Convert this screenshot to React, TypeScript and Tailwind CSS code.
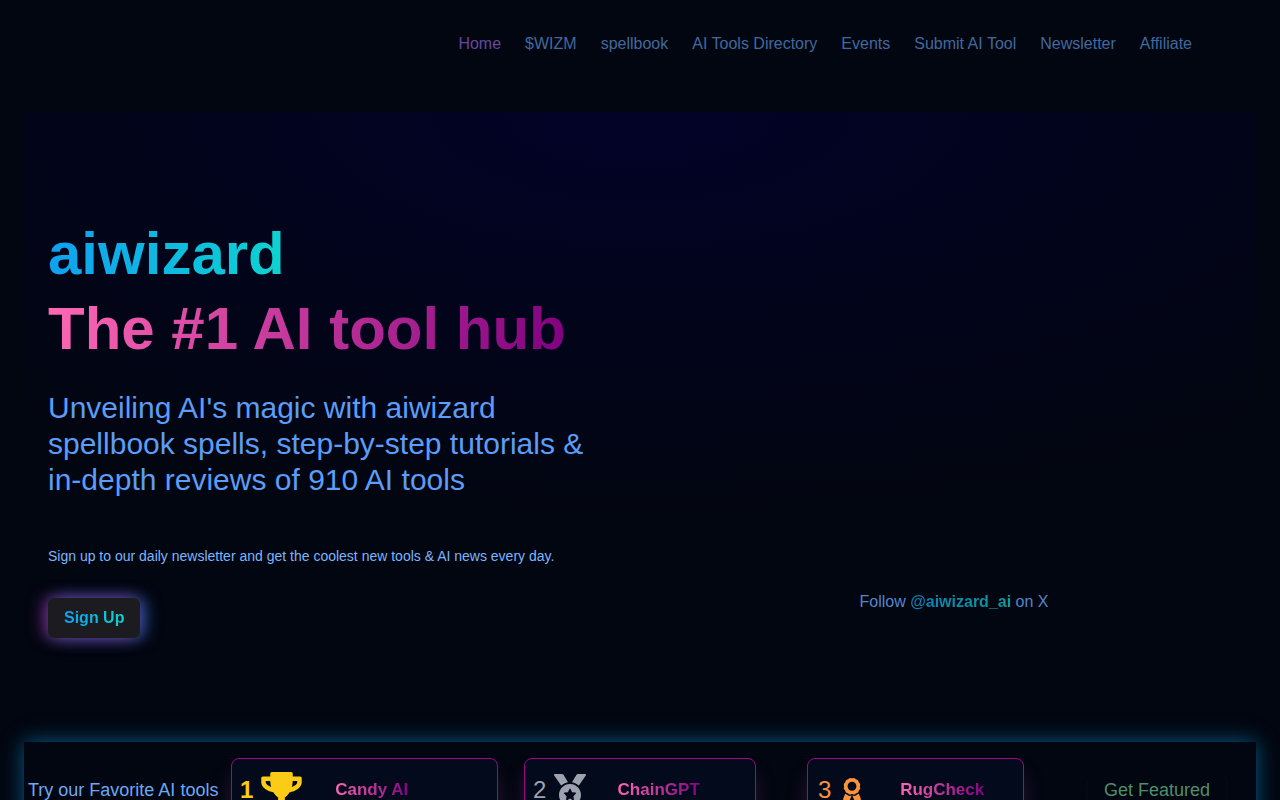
import type { ReactNode } from "react";
import { FaAward, FaMedal, FaTrophy } from "react-icons/fa";

const links = [
  "Home",
  "$WIZM",
  "spellbook",
  "AI Tools Directory",
  "Events",
  "Submit AI Tool",
  "Newsletter",
  "Affiliate",
];

const blueText =
  "bg-linear-to-r/srgb from-[#10a0f0] to-[#0dd3d0] bg-clip-text text-transparent";
const pinkText =
  "bg-[linear-gradient(100deg,#ff69b4,#800080)] bg-clip-text text-transparent";

type ToolProps = {
  rank: ReactNode;
  icon: ReactNode;
  name: string;
  className: string;
};

function ToolCard({ rank, icon, name, className }: ToolProps) {
  return (
    <a
      href="#"
      className={`flex h-16 items-center rounded-lg border border-[#a0058c] bg-[#030a1c] shadow-[0_16px_20px_rgba(160,60,160,0.25)] ${className}`}
    >
      {rank}
      {icon}
      <span className="flex flex-1 justify-center">
        <span className={`text-[17px] font-bold ${pinkText}`}>{name}</span>
      </span>
    </a>
  );
}

export default function App() {
  return (
    <div className="min-h-screen bg-[#020610] px-6 pb-8 font-['Liberation_Sans',Arial,sans-serif] text-[#60a5fa]">
      <header className="flex h-28 items-start justify-end pt-8 pr-16">
        <nav className="flex gap-6 text-base text-[#41699f]">
          {links.map((link) => (
            <a
              key={link}
              href="#"
              className={link === "Home" ? "text-[#66489f]" : undefined}
            >
              {link}
            </a>
          ))}
        </nav>
      </header>

      <main>
        <section className="grid grid-cols-2 bg-[radial-gradient(80%_65%_at_top,#020328,#02041b_50%,#020610)] px-6 pt-26 pb-26">
          <div>
            <h1 className="text-6xl leading-[75px] font-bold">
              <span className={`block w-fit ${blueText}`}>aiwizard</span>
              <span className={`block w-fit ${pinkText}`}>
                The #1 AI tool hub
              </span>
            </h1>
            <p className="mt-6 max-w-xl text-3xl text-[#5b9df8]">
              Unveiling AI's magic with aiwizard spellbook spells, step-by-step
              tutorials & in-depth reviews of 910 AI tools
            </p>
            <p className="mt-12 text-sm text-[#7db5fc]">
              Sign up to our daily newsletter and get the coolest new tools & AI
              news every day.
            </p>
            <button
              type="button"
              className="mt-8 h-10 rounded-md bg-[#1b1b20] px-4 font-bold shadow-[-5px_0_16px_rgba(180,60,190,0.55),5px_0_16px_rgba(59,120,220,0.7)]"
            >
              <span className={blueText}>Sign Up</span>
            </button>
          </div>
          <p className="self-end pb-6 pl-9 text-center text-base text-[#5585cc]">
            Follow{" "}
            <a
              href="#"
              className="bg-linear-to-r/srgb from-[#0a7fb5] to-[#0b9da0] bg-clip-text font-bold text-transparent"
            >
              @aiwizard_ai
            </a>{" "}
            on X
          </p>
        </section>

        <section className="flex items-center bg-[#020610] py-4 pr-[30px] pl-1 shadow-[0_0_20px_rgba(8,100,150,0.9)]">
          <h2 className="w-[203px] text-lg text-[#6ca8f8]">
            Try our Favorite AI tools
          </h2>
          <ToolCard
            className="w-[267px] pr-14 pl-2"
            rank={<span className="text-2xl font-bold text-[#facc15]">1</span>}
            icon={<FaTrophy className="ml-2 h-9 w-[41px] text-[#facc15]" />}
            name="Candy AI"
          />
          <ToolCard
            className="ml-[26px] w-[232px] pr-6 pl-2"
            rank={<span className="text-2xl text-[#9ca3af]">2</span>}
            icon={<FaMedal className="ml-2 size-8 text-[#9ca3af]" />}
            name="ChainGPT"
          />
          <ToolCard
            className="ml-[51px] w-[217px] pl-[10px]"
            rank={<span className="text-2xl text-[#fb923c]">3</span>}
            icon={<FaAward className="ml-3 h-6 w-[18px] text-[#fb923c]" />}
            name="RugCheck"
          />
          <a
            href="#"
            className="ml-auto px-4 py-2 text-lg text-[#4f8f6b] shadow-[0_8px_8px_-4px_rgba(80,120,100,0.3)]"
          >
            Get Featured
          </a>
        </section>
      </main>
    </div>
  );
}
